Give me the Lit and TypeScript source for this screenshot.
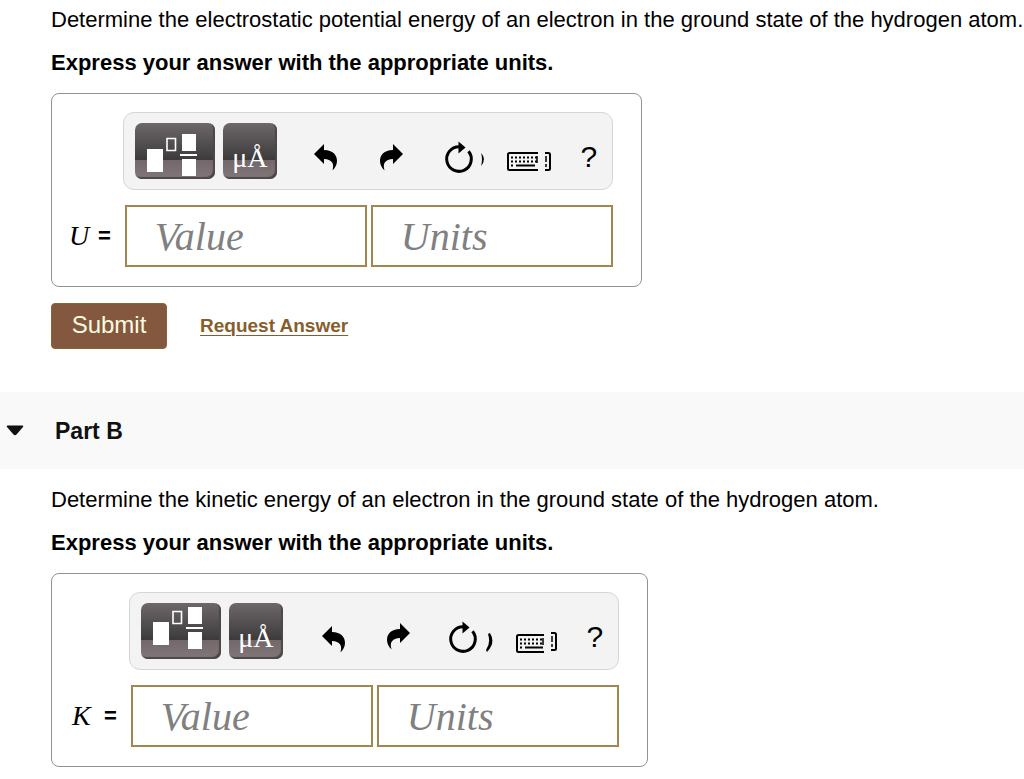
import { LitElement, html, svg, css } from "lit";
import { customElement, property } from "lit/decorators.js";

interface Art {
  template: number;
  undo: [number, number];
  redo: [number, number];
  ringX: number;
  ringTail: string;
  keyX: number;
  keyY: number;
}

const ART: Record<string, Art> = {
  a: {
    template: 0,
    undo: [0, 0],
    redo: [0, 0],
    ringX: 25,
    ringTail: "M47 30 Q53 36 47 43 Q49 36 47 30Z",
    keyX: 1,
    keyY: 29,
  },
  b: {
    template: -7,
    undo: [2, 2],
    redo: [1, -1],
    ringX: 23,
    ringTail: "M48 31 L50 30 Q56 40 47 49 L46 47 Q51 40 48 31Z",
    keyX: 4,
    keyY: 31,
  },
};

@customElement("answer-box")
export class AnswerBox extends LitElement {
  @property() symbol = "U";
  @property() variant = "a";

  static styles = css`
    :host {
      display: block;
      width: fit-content;
      max-width: 100%;
    }
    * {
      box-sizing: border-box;
    }
    .box {
      display: grid;
      grid-template-columns: auto auto;
      gap: 15px 12px;
      align-items: center;
      padding: 18px 28px 19px 17px;
      border: 1px solid #929292;
      border-radius: 8px;
    }
    .toolbar {
      grid-column: 2;
      display: flex;
      align-items: center;
      gap: 18px;
      padding: 10px 6px 10px 11px;
      border: 1px solid #d6d6d6;
      border-radius: 11px;
      background: #f3f3f3;
    }
    .dark-set {
      display: flex;
      gap: 8px;
      margin-right: 7px;
    }
    button {
      display: block;
      margin: 0;
      padding: 0;
      border: 0;
      background: none;
      color: #000;
      cursor: pointer;
    }
    .dark {
      height: 56px;
      border-radius: 7px;
      background: linear-gradient(#6e6768, #3c3b3c 66%, #72686a 66%, #81777a);
      box-shadow: inset -2px -2px 1px #4d4748;
      color: #fff;
    }
    .wide {
      width: 80px;
    }
    .units {
      width: 54px;
      padding-top: 14px;
      font: 28px/42px "Liberation Serif", serif;
    }
    .help {
      width: 34px;
      height: 56px;
      padding-top: 12px;
      font: 30px/44px "Liberation Sans", sans-serif;
    }
    svg {
      display: block;
    }
    .label {
      display: flex;
      align-items: center;
      gap: 7px;
      white-space: nowrap;
    }
    .symbol {
      min-width: 22px;
      font: italic 28px/32px "Liberation Serif", serif;
    }
    .symbol.b {
      min-width: 28px;
      padding-left: 3px;
    }
    .equals {
      font: bold 22px/32px "Liberation Sans", sans-serif;
    }
    .fields {
      display: flex;
      gap: 4px;
      padding-left: 2px;
    }
    input {
      flex: 1 1 242px;
      width: 242px;
      min-width: 0;
      height: 62px;
      margin: 0;
      padding: 0 28px;
      border: 2px solid #a3854f;
      border-radius: 0;
      background: #fff;
      color: #000;
      font: italic 40px/58px "Liberation Serif", serif;
    }
    input::placeholder {
      color: #808080;
      opacity: 1;
    }
  `;

  render() {
    const art = ART[this.variant];
    const { ringX: x, keyX: kx, keyY: ky } = art;
    return html`
      <div class="box">
        <div class="toolbar" role="toolbar" aria-label="Equation tools">
          <div class="dark-set">
            <button class="dark wide" aria-label="Templates">
              <svg width="80" height="56" fill="#fff">
                <g transform="translate(0 ${art.template})">
                  <path d="M12 26h16v23H12zM47 11h14v17H47zM45 31h17v2H45zM47 36h14v17H47z" />
                  <path d="M32 15.500h8.500v12H32z" fill="none" stroke="#fff" stroke-width="1.600" />
                </g>
              </svg>
            </button>
            <button class="dark units" aria-label="Symbols">μÅ</button>
          </div>
          <button aria-label="Undo">
            <svg width="48" height="56">
              <g transform="translate(${art.undo[0]} ${art.undo[1]})">
                <path d="M12 31L22 21V27C31 27 35 32 35 38C35 42 33 45 30.500 47.500C32.500 40 30 36.500 22 36V41Z" />
              </g>
            </svg>
          </button>
          <button aria-label="Redo">
            <svg width="48" height="56">
              <g transform="translate(${art.redo[0]} ${art.redo[1]})">
                <path d="M35 31L25 21V27C16 27 12 32 12 38C12 42 14 45 16.500 47.500C14.500 40 17 36.500 25 36V41Z" />
              </g>
            </svg>
          </button>
          <button aria-label="Reset">
            <svg width="54" height="56">
              <path
                d="M${x + 9.5} 28.200A12.300 12.300 0 1 1 ${x} 23.700"
                fill="none"
                stroke="#000"
                stroke-width="3"
              />
              <path d="M${x - 0.5} 18.500L${x + 6.5} 24.500L${x - 0.5} 30.500Z" />
              <path d=${art.ringTail} />
            </svg>
          </button>
          <button aria-label="Keyboard shortcuts">
            <svg width="48" height="56">
              <path
                d="M32 ${ky + 1}H${kx + 2.5}Q${kx + 1} ${ky + 1} ${kx + 1} ${ky + 2.5}V${ky + 16.5}Q${kx + 1} ${ky + 18} ${kx + 2.5} ${ky + 18}H32"
                fill="none"
                stroke="#000"
                stroke-width="2"
              />
              ${[5.5, 9.5, 13.5].map(
                (dy, i) => svg`<path
                  d="M${kx + 4} ${ky + dy}H31"
                  stroke="#000" stroke-width="2"
                  stroke-dasharray=${i === 2 ? "2 3 19 2 2 9" : "2 2"} />`
              )}
              <path d="M31 ${ky + 4}V${ky + 11}" stroke="#000" stroke-width="1.500" />
              <path
                d="M39 30H42.500Q44 30 44 31.500V45.500Q44 47 42.500 47H39"
                fill="none"
                stroke="#000"
                stroke-width="2"
              />
              <path d="M40 33V39M40 41V44" stroke="#000" stroke-width="1.500" />
            </svg>
          </button>
          <button class="help" aria-label="Help">?</button>
        </div>
        <label class="label" for="value">
          <span class="symbol ${this.variant}">${this.symbol}</span>
          <span class="equals">=</span>
        </label>
        <div class="fields">
          <input id="value" type="text" placeholder="Value" />
          <input type="text" placeholder="Units" aria-label="Units" />
        </div>
      </div>
    `;
  }
}

@customElement("app-root")
export class AppRoot extends LitElement {
  static styles = css`
    :host {
      display: block;
      color: #000;
      background: #fff;
      font: 22px/26px "Liberation Sans", Arial, sans-serif;
    }
    * {
      box-sizing: border-box;
    }
    section {
      padding-left: 51px;
    }
    .first {
      padding-top: 7px;
      padding-bottom: 43px;
    }
    .second {
      padding-top: 18px;
      padding-bottom: 12px;
    }
    p {
      margin: 0 0 17px;
    }
    .directive {
      font-weight: bold;
    }
    .actions {
      display: flex;
      align-items: center;
      gap: 33px;
      margin-top: 16px;
    }
    .submit {
      width: 116px;
      height: 46px;
      padding: 0 0 2px;
      border: 1px solid #8a6438;
      border-radius: 4px;
      background: #84583f;
      color: #fffbe0;
      font: 24px/40px "Liberation Sans", Arial, sans-serif;
      cursor: pointer;
    }
    .request {
      color: #875e2b;
      font-size: 19px;
      font-weight: bold;
      text-underline-offset: 3px;
      text-decoration-thickness: 1px;
    }
    .part {
      display: flex;
      align-items: center;
      height: 77px;
      padding-left: 6px;
      gap: 31px;
      background: #f9f9f9;
    }
    .part h2 {
      margin: 0;
      color: #111;
      font-size: 23px;
    }
    .toggle {
      padding: 0;
      border: 0;
      background: none;
      cursor: pointer;
    }
    .toggle svg {
      display: block;
    }
  `;

  render() {
    return html`
      <section class="first">
        <p>
          Determine the electrostatic potential energy of an electron in the
          ground state of the hydrogen atom.
        </p>
        <p class="directive">Express your answer with the appropriate units.</p>
        <answer-box symbol="U" variant="a"></answer-box>
        <div class="actions">
          <button class="submit">Submit</button>
          <a class="request" href="#">Request Answer</a>
        </div>
      </section>
      <header class="part">
        <button class="toggle" aria-label="Collapse Part B">
          <svg width="18" height="11" fill="#111">
            <path d="M1.500 0.500H16.500Q18 0.500 17 2L10.500 9.500Q9 11 7.500 9.500L1 2Q0 0.500 1.500 0.500Z" />
          </svg>
        </button>
        <h2>Part B</h2>
      </header>
      <section class="second">
        <p>
          Determine the kinetic energy of an electron in the ground state of
          the hydrogen atom.
        </p>
        <p class="directive">Express your answer with the appropriate units.</p>
        <answer-box symbol="K" variant="b"></answer-box>
      </section>
    `;
  }
}
